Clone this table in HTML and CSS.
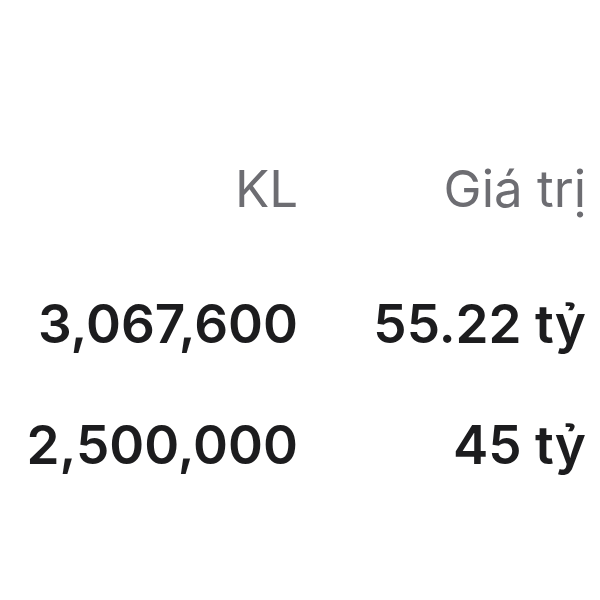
FILE: index.html
```html
<!DOCTYPE html>
<html lang="vi">
<head>
<meta charset="utf-8">
<link rel="stylesheet" href="styles.css">
</head>
<body>
<div class="table">
  <div class="row head">
    <div class="cell c1">KL</div>
    <div class="cell c2">Giá trị</div>
  </div>
  <div class="row">
    <div class="cell c1">3,067,600</div>
    <div class="cell c2">55.22 tỷ</div>
  </div>
  <div class="row">
    <div class="cell c1">2,500,000</div>
    <div class="cell c2">45 tỷ</div>
  </div>
</div>
</body>
</html>
```
FILE: styles.css
```css
html, body {
  margin: 0;
  padding: 0;
  background: #ffffff;
}
body {
  width: 600px;
  height: 600px;
  overflow: hidden;
  font-family: Inter, "Liberation Sans", sans-serif;
}
.table {
  padding-top: 128px;
}
.row {
  display: grid;
  grid-template-columns: 298px 288px;
  height: 121px;
  line-height: 121px;
  font-size: 53px;
  font-weight: 600;
  color: #1c1c1e;
  white-space: nowrap;
}
.row.head {
  height: 136px;
  font-size: 51px;
  font-weight: 400;
  color: #6d6d72;
}
.cell {
  text-align: right;
}
```
